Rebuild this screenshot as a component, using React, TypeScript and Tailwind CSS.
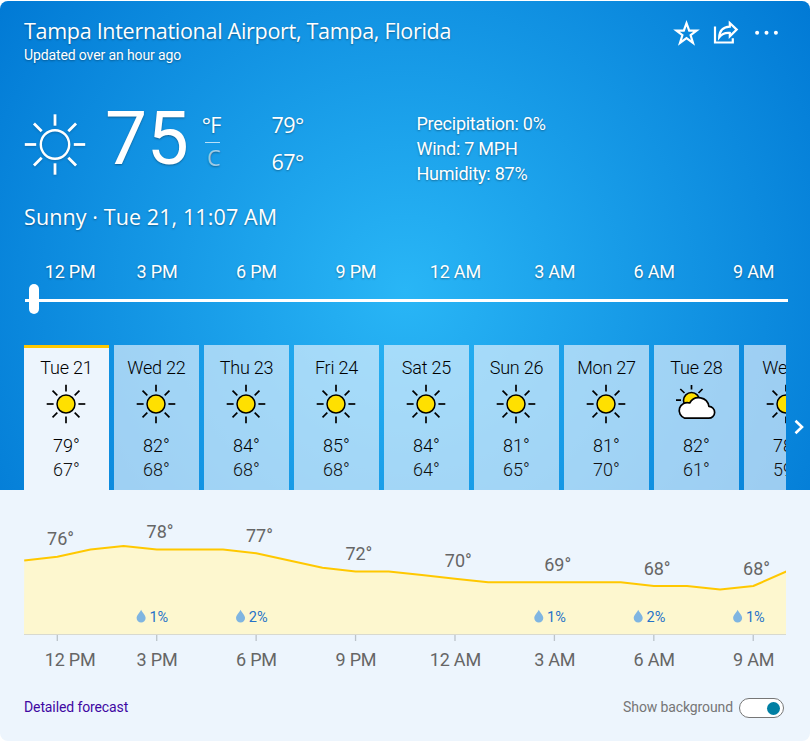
import React from "react";

type Day = { label: string; high: string; low: string; icon: "sun" | "cloud" };

const days: Day[] = [
  { label: "Tue 21", high: "79°", low: "67°", icon: "sun" },
  { label: "Wed 22", high: "82°", low: "68°", icon: "sun" },
  { label: "Thu 23", high: "84°", low: "68°", icon: "sun" },
  { label: "Fri 24", high: "85°", low: "68°", icon: "sun" },
  { label: "Sat 25", high: "84°", low: "64°", icon: "sun" },
  { label: "Sun 26", high: "81°", low: "65°", icon: "sun" },
  { label: "Mon 27", high: "81°", low: "70°", icon: "sun" },
  { label: "Tue 28", high: "82°", low: "61°", icon: "cloud" },
  { label: "Wed 1", high: "78°", low: "59°", icon: "sun" },
];

const hours = ["12 PM", "3 PM", "6 PM", "9 PM", "12 AM", "3 AM", "6 AM", "9 AM"];

// Hourly curve heights inside the chart, one value per hour.
const curve = [
  70.5, 66.7, 59.5, 56, 59.5, 59.5, 59.5, 63.2, 70.5, 77.8, 81.5, 81.5, 85, 88.7,
  92.3, 92.3, 92.3, 92.3, 92.3, 96, 96, 99.5, 96, 81.5,
];
const STEP = 33.14;

const marks = [
  { temp: "76°", y: 55 },
  { temp: "78°", y: 48, rain: "1%" },
  { temp: "77°", y: 52, rain: "2%" },
  { temp: "72°", y: 70 },
  { temp: "70°", y: 77 },
  { temp: "69°", y: 81, rain: "1%" },
  { temp: "68°", y: 85, rain: "2%" },
  { temp: "68°", y: 85, rain: "1%" },
];

const rays = [0, 45, 90, 135, 180, 225, 270, 315];

function BigSun() {
  return (
    <svg className="block h-[62px] w-[62px] drop-shadow-[0_1px_1px_rgba(0,0,0,0.2)]" viewBox="-31 -31.5 62 62" fill="none" stroke="#fff">
      <circle r="14.2" strokeWidth="2.4" />
      {rays.map((a) => (
        <path key={a} d={a % 90 ? "M0 -18.8V-29.8" : "M0 -18.8V-30.2"} strokeWidth="2.8" transform={`rotate(${a})`} />
      ))}
    </svg>
  );
}

function Sun() {
  return (
    <svg className="block h-10 w-10" viewBox="-20 -20 40 40" stroke="#000">
      <circle r="9" strokeWidth="1.5" fill="#ffe000" />
      {rays.map((a) => (
        <path key={a} d={a % 90 ? "M0 -12.3V-19" : "M0 -12.4V-19.3"} strokeWidth="1.7" transform={`rotate(${a})`} />
      ))}
    </svg>
  );
}

function PartlyCloudy() {
  return (
    <svg className="block h-10 w-10" viewBox="0 0 40 40" stroke="#000" fill="none">
      <circle cx="15.5" cy="16.5" r="8" fill="#ffe000" strokeWidth="1.6" />
      <path d="M15.5 1V5.5M4.3 5L8.5 9M26.5 5L22.5 9M0 16.2H5" strokeWidth="1.7" />
      <path
        d="M8.7 34.2H32.6a5.9 5.9 0 0 0 0.3-11.8a10.3 10.3 0 0 0-19.2-3.4a7.8 7.8 0 1 0-5 15.2Z"
        fill="#fff"
        strokeWidth="1.7"
        strokeLinejoin="round"
      />
    </svg>
  );
}

function HourLabels() {
  return (
    <div className="flex w-[780px] text-center text-[18px] leading-6 tracking-[-0.2px] whitespace-nowrap">
      {hours.map((h, i) => (
        <div key={h} className={i === 0 ? "w-[83.3px] shrink-0 pl-[9px]" : "w-[99.45px] shrink-0"}>
          {h}
        </div>
      ))}
    </div>
  );
}

function DayCard({ day, active }: { day: Day; active: boolean }) {
  return (
    <div
      className={`flex h-[145px] w-[85px] shrink-0 flex-col items-center text-[18px] leading-6 font-[360] text-black ${
        active ? "border-t-[3px] border-[#ffc800] bg-[#edf5fd] pt-[8px]" : "bg-[#edf5fd]/65 pt-[11px]"
      }`}
    >
      <div className="tracking-[-0.2px] whitespace-nowrap">{day.label}</div>
      <div className="mt-[4px] mr-px">{day.icon === "sun" ? <Sun /> : <PartlyCloudy />}</div>
      <div className="mt-[10px]">{day.high}</div>
      <div className="text-[#111]">{day.low}</div>
    </div>
  );
}

function Chart() {
  const pts = curve.map((y, i) => `${(0.2 + i * STEP).toFixed(1)},${y}`).join(" ");
  return (
    <svg className="block h-[151px] w-[762px]" viewBox="0 0 762 151">
      <polygon points={`0,144 ${pts} 762,81.5 762,144`} fill="#fdf7cf" />
      <polyline points={pts} fill="none" stroke="#ffc800" strokeWidth="2" strokeLinejoin="round" />
      <path d="M0 144.5H762" stroke="#d8d9cf" strokeWidth="1" />
      {marks.map((m, i) => {
        const x = 33.3 + i * STEP * 3;
        return (
          <g key={i}>
            <path d={`M${x} 145V151`} stroke="#bcc3c9" strokeWidth="1.3" />
            <text x={x + 3.3} y={m.y} textAnchor="middle" fontSize="18" fill="#666">
              {m.temp}
            </text>
            {m.rain && (
              <>
                <path
                  transform={`translate(${x - 15.6} 119.8)`}
                  d="M0 0C1.5 3.5 4.5 5.3 4.5 8.3a4.5 4.4 0 0 1-9 0C-4.5 5.3-1.5 3.5 0 0Z"
                  fill="#7fb5e1"
                />
                <text x={x - 7.3} y="132" fontSize="14.5" fill="#2672c8">
                  {m.rain}
                </text>
              </>
            )}
          </g>
        );
      })}
    </svg>
  );
}

export default function App() {
  return (
    <div className="h-[741px] w-[810px] bg-white pt-px font-['Roboto',sans-serif]">
      <div className="flex h-[740px] flex-col overflow-hidden rounded-lg bg-[#edf5fd]">
        <section className="h-[489px] bg-[radial-gradient(circle_at_405px_290px,#29b6f6_0px,#0078d4_510px)] pl-6 text-white">
          <div className="[text-shadow:0_1px_2px_rgba(0,0,0,0.35)]">
            <div className="flex h-[62px] justify-between pt-[15px] pr-[30px]">
              <div>
                <h1 className="font-['Open_Sans',sans-serif] text-[21.5px] leading-[30px] tracking-[-0.29px] whitespace-nowrap">
                  Tampa International Airport, Tampa, Florida
                </h1>
                <p className="-mt-px text-[14px] leading-5 tracking-[-0.12px]">Updated over an hour ago</p>
              </div>
              <div className="flex h-[30px] items-center gap-[13px] pt-1">
                <svg className="h-[27px] w-[27px]" viewBox="0 0 27 27" fill="none" stroke="#fff" strokeWidth="2.2">
                  <path d="M13.5 3.2L16.2 10.6H23.6L17.6 15.2L20 23L13.5 18.2L7 23L9.4 15.2L3.4 10.6H10.8Z" />
                </svg>
                <svg className="h-[27px] w-[27px]" viewBox="0 0 27 27" fill="none" stroke="#fff" strokeWidth="2.2">
                  <path d="M2 6.5V22.5H19.8V18.3" />
                  <path d="M16.8 3L23.7 9.6L16.8 16.4V12.9C12.3 12.4 8.8 13.8 6.2 17.3C6.5 11.2 10 6.9 16.8 6.6Z" />
                </svg>
                <svg className="h-[27px] w-[27px]" viewBox="0 0 27 27" fill="#fff">
                  <circle cx="4.1" cy="12.7" r="2" />
                  <circle cx="13.5" cy="12.7" r="2" />
                  <circle cx="22.9" cy="12.7" r="2" />
                </svg>
              </div>
            </div>

            <div className="flex h-[138px] pt-[37px]">
              <div className="pt-[13px]">
                <BigSun />
              </div>
              <div className="ml-[19px] w-[90px] text-[75px] leading-[76px] tracking-[-0.5px]">75</div>
              <div className="ml-[1.5px] flex w-[24px] flex-col items-end font-['Open_Sans',sans-serif] text-[21.5px]">
                <div className="h-[42px] pt-[11px] leading-[28px] tracking-[-0.8px]">°F</div>
                <div className="mr-px h-px w-[15px] bg-white/70" />
                <div className="pt-[1px] leading-[28px] text-white/60">C</div>
              </div>
              <div className="ml-[51px] w-[145px] pt-[6px] font-['Open_Sans',sans-serif] text-[21.5px] leading-[37px] tracking-[-0.5px]">
                <div>79°</div>
                <div>67°</div>
              </div>
              <div className="pt-[11px] text-[18px] leading-[25px] tracking-[-0.25px] whitespace-nowrap">
                <div>Precipitation: 0%</div>
                <div>Wind: 7 MPH</div>
                <div>Humidity: 87%</div>
              </div>
            </div>

            <div className="h-[59px] font-['Open_Sans',sans-serif] text-[21.5px] leading-[32px] tracking-[0.1px]">
              Sunny · Tue 21, 11:07 AM
            </div>
            <HourLabels />
          </div>

          <div className="flex h-[61px] w-[764px] items-start">
            <div className="flex h-[30px] w-full items-center pl-px">
              <div className="mt-[3px] h-[3px] w-1 bg-white" />
              <div className="h-[30px] w-[10px] rounded-[5px] bg-white" />
              <div className="mt-[3px] h-[3px] flex-1 bg-white" />
            </div>
          </div>

          <div className="flex">
            <div className="flex w-[762px] gap-[5px] overflow-hidden">
              {days.map((d, i) => (
                <DayCard key={d.label} day={d} active={i === 0} />
              ))}
            </div>
            <div className="flex h-[145px] w-6 items-center justify-center pt-[19px] pl-px">
              <svg className="h-4 w-3" viewBox="0 0 12 16" fill="none" stroke="#fff" strokeWidth="2.6">
                <path d="M2.5 1.8L9 8L2.5 14.2" />
              </svg>
            </div>
          </div>
        </section>

        <section className="flex-1 pl-6">
          <Chart />
          <div className="pt-[7px] text-[#666]">
            <HourLabels />
          </div>
          <div className="flex items-start justify-between pt-[25px] pr-[26px] text-[14px] leading-5 tracking-[-0.11px]">
            <a className="text-[#4007a2]">Detailed forecast</a>
            <div className="flex items-start gap-[6px] text-[#767676]">
              <span>Show background</span>
              <span className="mt-px flex h-5 w-[45px] items-center justify-end rounded-full border border-[#767676] bg-white pr-[3px]">
                <span className="h-[13px] w-[13px] rounded-full bg-[#007fa3]" />
              </span>
            </div>
          </div>
        </section>
      </div>
    </div>
  );
}
